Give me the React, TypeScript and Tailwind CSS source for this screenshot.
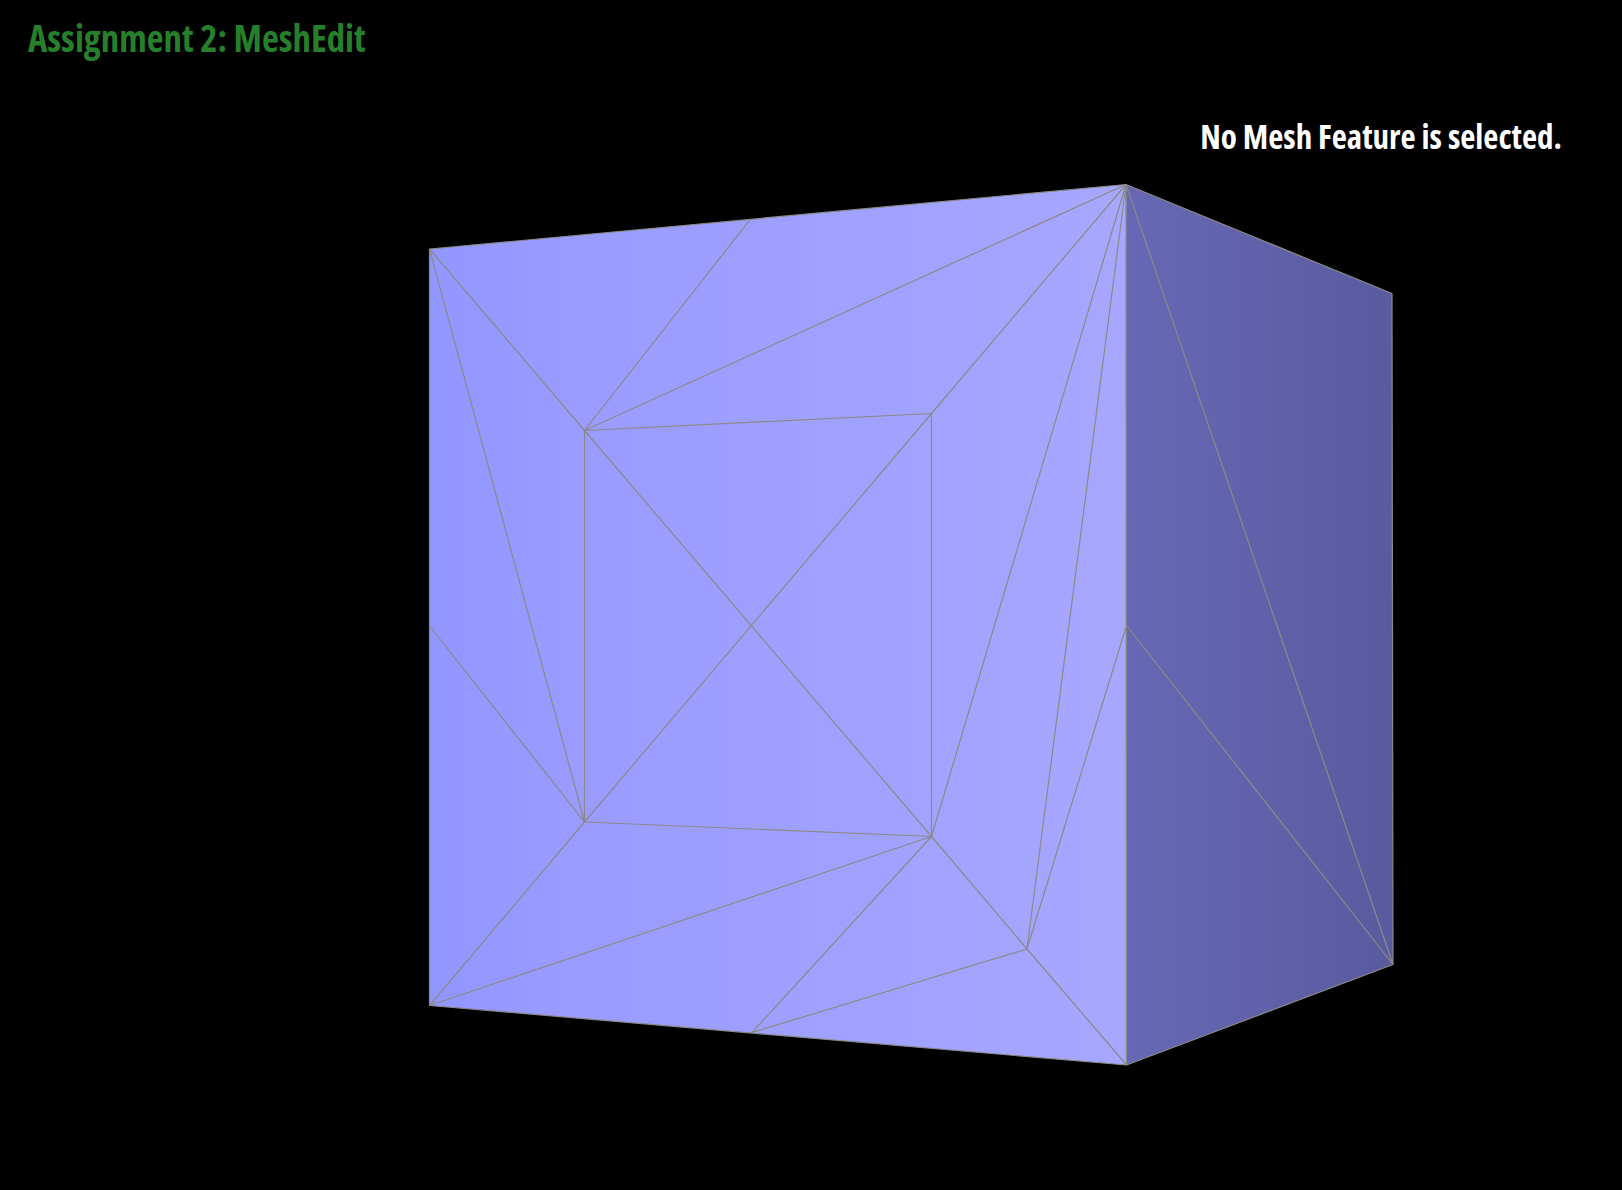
import React from 'react';

const v = {
  tl: [429.5, 249],
  tr: [1126, 184.5],
  bl: [429.5, 1005.5],
  br: [1126.5, 1065],
  backTop: [1392, 293.5],
  backBottom: [1393, 964.5],
  topMid: [750.5, 219],
  leftMid: [429.5, 626],
  rightMid: [1126.5, 625.5],
  bottomMid: [752, 1032.5],
  innerTl: [584.5, 430.5],
  innerTr: [931.5, 413.5],
  innerBl: [584.5, 822],
  innerBr: [931.5, 836.5],
  center: [751, 626],
  extra: [1027, 949],
};

type Key = keyof typeof v;

const edges: [Key, Key][] = [
  ['tl', 'tr'],
  ['tr', 'br'],
  ['br', 'bl'],
  ['bl', 'tl'],
  ['tr', 'backTop'],
  ['backTop', 'backBottom'],
  ['backBottom', 'br'],
  ['tr', 'backBottom'],
  ['rightMid', 'backBottom'],
  ['tl', 'innerTl'],
  ['tl', 'innerBl'],
  ['topMid', 'innerTl'],
  ['tr', 'innerTl'],
  ['tr', 'innerTr'],
  ['tr', 'innerBr'],
  ['tr', 'extra'],
  ['rightMid', 'extra'],
  ['innerBr', 'extra'],
  ['extra', 'br'],
  ['bottomMid', 'extra'],
  ['bottomMid', 'innerBr'],
  ['bl', 'innerBr'],
  ['bl', 'innerBl'],
  ['leftMid', 'innerBl'],
  ['innerTl', 'innerTr'],
  ['innerTr', 'innerBr'],
  ['innerBr', 'innerBl'],
  ['innerBl', 'innerTl'],
  ['innerTl', 'innerBr'],
  ['innerTr', 'innerBl'],
];

const pts = (keys: Key[]) => keys.map((k) => v[k].join(',')).join(' ');

const CubeMesh = () => (
  <svg className="absolute inset-0" width={1622} height={1190} viewBox="0 0 1622 1190">
    <defs>
      <linearGradient id="frontFace" gradientUnits="userSpaceOnUse" x1="430" y1="0" x2="1126" y2="0">
        <stop offset="0" stopColor="#9296ff" />
        <stop offset="0.2" stopColor="#999bff" />
        <stop offset="1" stopColor="#a7a7ff" />
      </linearGradient>
      <linearGradient id="sideFace" gradientUnits="userSpaceOnUse" x1="1126" y1="0" x2="1393" y2="0">
        <stop offset="0" stopColor="#6768b5" />
        <stop offset="1" stopColor="#5a5a9f" />
      </linearGradient>
    </defs>
    <polygon points={pts(['tl', 'tr', 'br', 'bl'])} fill="url(#frontFace)" />
    <polygon points={pts(['tr', 'backTop', 'backBottom', 'br'])} fill="url(#sideFace)" />
    {edges.map(([a, b]) => (
      <line
        key={a + b}
        x1={v[a][0]}
        y1={v[a][1]}
        x2={v[b][0]}
        y2={v[b][1]}
        stroke="#8a8a86"
        strokeWidth={1.2}
      />
    ))}
  </svg>
);

export default function App() {
  return (
    <div className="relative h-[1190px] w-full overflow-hidden bg-black font-['Open_Sans',sans-serif] font-bold [font-stretch:condensed]">
      <CubeMesh />
      <div className="relative flex flex-col">
        <h1 className="pl-7 pt-[14px] text-[36.8px] leading-[48px] text-[#267f2b]">Assignment 2: MeshEdit</h1>
        <p className="pr-[60px] pt-[53px] text-right text-[33px] leading-[44px] text-white">No Mesh Feature is selected.</p>
      </div>
    </div>
  );
}
